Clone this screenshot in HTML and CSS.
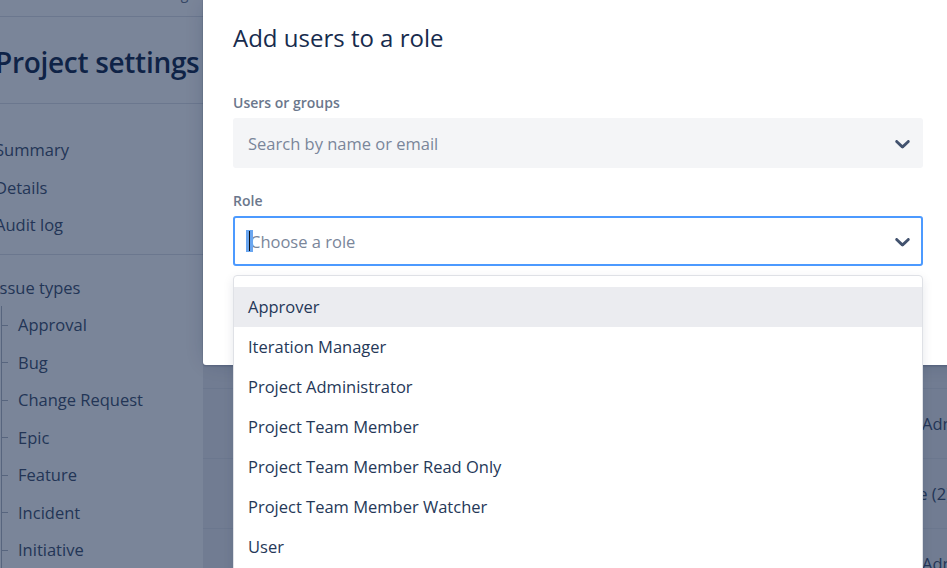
FILE: index.html
```html
<!DOCTYPE html>
<html lang="en">
<head>
<meta charset="utf-8">
<title>Add users to a role</title>
<link rel="stylesheet" href="styles.css">
</head>
<body>
<div class="page">
  <aside class="sidebar">
    <div class="sidebar-inner">
      <div class="crumbs"><span>Settings</span></div>
      <div class="title-block"><h1>Project settings</h1></div>
      <ul class="nav">
        <li>Summary</li>
        <li>Details</li>
        <li>Audit log</li>
      </ul>
      <div class="group">
        <div class="group-title">Issue types</div>
        <ul class="tree">
          <li>Approval</li>
          <li>Bug</li>
          <li>Change Request</li>
          <li>Epic</li>
          <li>Feature</li>
          <li>Incident</li>
          <li>Initiative</li>
          <li>Story</li>
        </ul>
      </div>
    </div>
  </aside>
  <main class="main">
    <div class="thead"></div>
    <div class="trow"><span class="cell">Administrators</span></div>
    <div class="trow trow-end"><span class="cell">Customer Service (2)</span></div>
    <div class="trow"><span class="cell">Administrators</span></div>
  </main>
</div>

<div class="blanket"></div>

<div class="modal" role="dialog">
  <h2 class="modal-title">Add users to a role</h2>

  <label class="field-label">Users or groups</label>
  <div class="select select-muted">
    <span class="placeholder">Search by name or email</span>
    <svg class="chevron" viewBox="0 0 20 20" width="25" height="25" aria-hidden="true"><path d="M4.516 7.548c0.436-0.446 1.043-0.481 1.576 0l3.908 3.747 3.908-3.747c0.533-0.481 1.141-0.446 1.574 0 0.436 0.445 0.408 1.197 0 1.615-0.406 0.418-4.695 4.502-4.695 4.502-0.217 0.223-0.502 0.335-0.787 0.335s-0.57-0.112-0.789-0.335c0 0-4.287-4.084-4.695-4.502s-0.436-1.170 0-1.615z"/></svg>
  </div>

  <label class="field-label field-label-second">Role</label>
  <div class="field-wrap">
    <div class="select select-focus">
      <span class="caret"></span><span class="placeholder placeholder-after">Choose a role</span>
      <svg class="chevron" viewBox="0 0 20 20" width="25" height="25" aria-hidden="true"><path d="M4.516 7.548c0.436-0.446 1.043-0.481 1.576 0l3.908 3.747 3.908-3.747c0.533-0.481 1.141-0.446 1.574 0 0.436 0.445 0.408 1.197 0 1.615-0.406 0.418-4.695 4.502-4.695 4.502-0.217 0.223-0.502 0.335-0.787 0.335s-0.57-0.112-0.789-0.335c0 0-4.287-4.084-4.695-4.502s-0.436-1.170 0-1.615z"/></svg>
    </div>
    <div class="menu" role="listbox">
      <div class="option option-active">Approver</div>
      <div class="option">Iteration Manager</div>
      <div class="option">Project Administrator</div>
      <div class="option">Project Team Member</div>
      <div class="option">Project Team Member Read Only</div>
      <div class="option">Project Team Member Watcher</div>
      <div class="option">User</div>
    </div>
  </div>
</div>
</body>
</html>
```

FILE: styles.css
```css
* { box-sizing: border-box; }

html, body {
  margin: 0;
  padding: 0;
}

body {
  width: 947px;
  height: 568px;
  overflow: hidden;
  position: relative;
  font-family: "Open Sans", "Noto Sans", sans-serif;
  background: #ffffff;
}

.page {
  display: flex;
  height: 568px;
  width: 1000px;
}

/* ---------- sidebar ---------- */
.sidebar {
  width: 203px;
  flex: none;
  background: #ffffff;
  color: #42526e;
  overflow: hidden;
}

.sidebar-inner {
  margin-left: -5px;
}

.crumbs {
  height: 17px;
  border-bottom: 1px solid #dfe1e6;
  text-align: right;
  font-size: 14px;
  line-height: 20px;
  overflow: hidden;
  color: #6b778c;
}

.crumbs span {
  display: block;
  margin-top: -16px;
  padding-right: 8px;
}

.title-block {
  padding: 27px 0 23px;
  border-bottom: 1px solid #dfe1e6;
}

.title-block h1 {
  margin: 0;
  font-size: 28px;
  line-height: 36px;
  font-weight: 600;
  letter-spacing: -0.3px;
  color: #172b4d;
  white-space: nowrap;
}

.nav {
  list-style: none;
  margin: 0;
  padding: 27px 0 10px;
  border-bottom: 1px solid #dfe1e6;
}

.nav li,
.group-title,
.tree li {
  height: 37.5px;
  line-height: 37.5px;
  font-size: 16.5px;
  white-space: nowrap;
}

.group {
  padding-top: 14px;
}

.tree {
  list-style: none;
  margin: 0 0 0 6px;
  padding: 0;
  border-left: 1px solid #b3bac5;
}

.tree li {
  position: relative;
  padding-left: 16px;
}

.tree li::before {
  content: "";
  position: absolute;
  left: 0;
  top: 50%;
  width: 6px;
  border-top: 1px solid #b3bac5;
}

/* ---------- main ---------- */
.main {
  flex: 1;
  min-width: 0;
  overflow: hidden;
  background: #ebecf0;
  color: #42526e;
}

.thead {
  height: 389px;
  border-bottom: 1px solid #dfe1e6;
}

.trow {
  height: 70px;
  line-height: 70px;
  font-size: 16.5px;
  border-bottom: 1px solid #dfe1e6;
  padding-left: 719px;
  white-space: nowrap;
}

.trow-end {
  padding-left: 0;
  padding-right: 49px;
  text-align: right;
}

/* ---------- blanket ---------- */
.blanket {
  position: absolute;
  inset: 0;
  background: rgba(9, 30, 66, 0.54);
}

/* ---------- modal ---------- */
.modal {
  position: absolute;
  top: 0;
  left: 203px;
  width: 800px;
  height: 365px;
  padding: 24px 30px;
  background: #ffffff;
  border-radius: 0 0 3px 3px;
  box-shadow: 0 0 0 1px rgba(9, 30, 66, 0.08), 0 2px 1px rgba(9, 30, 66, 0.08), 0 0 20px -6px rgba(9, 30, 66, 0.31);
}

.modal-title {
  margin: 0;
  font-size: 24px;
  line-height: 28px;
  font-weight: 500;
  color: #172b4d;
  white-space: nowrap;
}

.field-label {
  display: block;
  margin-top: 41px;
  margin-bottom: 5px;
  font-size: 14px;
  line-height: 20px;
  font-weight: 600;
  color: #6b778c;
}

.field-label-second {
  margin-top: 23px;
}

.select {
  width: 690px;
  height: 50px;
  border-radius: 3px;
  border: 2px solid transparent;
  display: flex;
  align-items: center;
  padding: 0 6px 0 13px;
  font-size: 16.5px;
}

.select-muted {
  background: #f4f5f7;
  border-color: #f4f5f7;
}

.select-focus {
  background: #ffffff;
  border-color: #4c9aff;
  padding-left: 11px;
}

.placeholder {
  flex: 1;
  color: #7a869a;
  white-space: nowrap;
}

.placeholder-after {
  margin-left: -3px;
}

.caret {
  flex: none;
  position: relative;
  width: 7px;
  height: 22px;
  background: #6aa6f0;
}

.caret::after {
  content: "";
  position: absolute;
  left: 3px;
  top: 1px;
  bottom: 1px;
  width: 1px;
  background: #101010;
}

.chevron {
  flex: none;
  fill: #42526e;
}

.field-wrap {
  position: relative;
}

.menu {
  position: absolute;
  top: calc(100% + 9px);
  left: 0;
  width: 690px;
  height: 320px;
  padding-top: 11px;
  background: #ffffff;
  border: 1px solid #dfe1e6;
  border-radius: 4px;
  box-shadow: 0 4px 11px rgba(9, 30, 66, 0.1);
}

.option {
  height: 40px;
  line-height: 40px;
  padding-left: 14px;
  font-size: 16.5px;
  color: #253858;
  white-space: nowrap;
}

.option-active {
  background: #ebecf0;
}
```
